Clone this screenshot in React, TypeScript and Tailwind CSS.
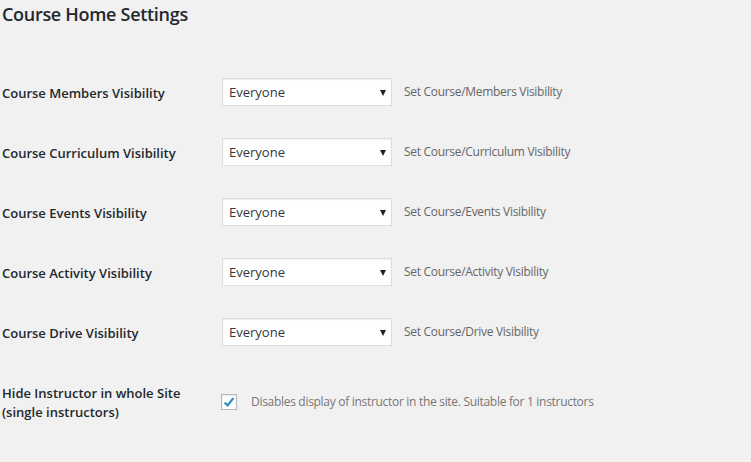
const rows = [
  { label: 'Course Members Visibility', desc: 'Set Course/Members Visibility' },
  { label: 'Course Curriculum Visibility', desc: 'Set Course/Curriculum Visibility' },
  { label: 'Course Events Visibility', desc: 'Set Course/Events Visibility' },
  { label: 'Course Activity Visibility', desc: 'Set Course/Activity Visibility' },
  { label: 'Course Drive Visibility', desc: 'Set Course/Drive Visibility' },
];

function SelectBox() {
  return (
    <div className="relative w-[170px] h-[28px] bg-white border border-[#dddddd] shadow-[inset_0_1px_2px_rgba(0,0,0,0.07)] flex items-center pl-[6px] pt-[2px] text-[13px] text-[#32373c]">
      Everyone
      <span className="absolute right-[5px] top-[11px] w-0 h-0 border-l-[3.5px] border-r-[3.5px] border-t-[6px] border-l-transparent border-r-transparent border-t-[#222]" />
    </div>
  );
}

export default function App() {
  return (
    <div
      className="w-[751px] h-[462px] bg-[#f1f1f1] text-[#23282d] overflow-hidden pl-[2px]"
      style={{ fontFamily: '"Open Sans", "Noto Sans", sans-serif' }}
    >
      <h2 className="text-[18px] leading-[28px] font-semibold tracking-[-0.3px]">Course Home Settings</h2>

      <div className="mt-[34px]">
        {rows.map((r) => (
          <div key={r.label} className="flex items-center h-[60px]">
            <div className="w-[220px] pt-[4px] text-[13px] font-semibold">{r.label}</div>
            <SelectBox />
            <div className="ml-[12px] text-[12px] tracking-[-0.3px] text-[#666]">{r.desc}</div>
          </div>
        ))}

        <div className="flex items-center h-[80px]">
          <div className="w-[219px] pt-[2px] text-[13px] font-semibold leading-[19px]">
            Hide Instructor in whole Site
            <br />
            (single instructors)
          </div>
          <div className="w-[16px] h-[16px] border border-[#b4b9be] bg-white shadow-[inset_0_1px_2px_rgba(0,0,0,0.1)] flex items-center justify-center">
            <svg viewBox="0 0 16 16" className="w-[14px] h-[14px]">
              <path d="M3 8.5 L6.5 12 L13 3.5" fill="none" stroke="#1e8cbe" strokeWidth="2.4" />
            </svg>
          </div>
          <div className="ml-[14px] text-[12px] tracking-[-0.3px] text-[#777]">
            Disables display of instructor in the site. Suitable for 1 instructors
          </div>
        </div>
      </div>
    </div>
  );
}
